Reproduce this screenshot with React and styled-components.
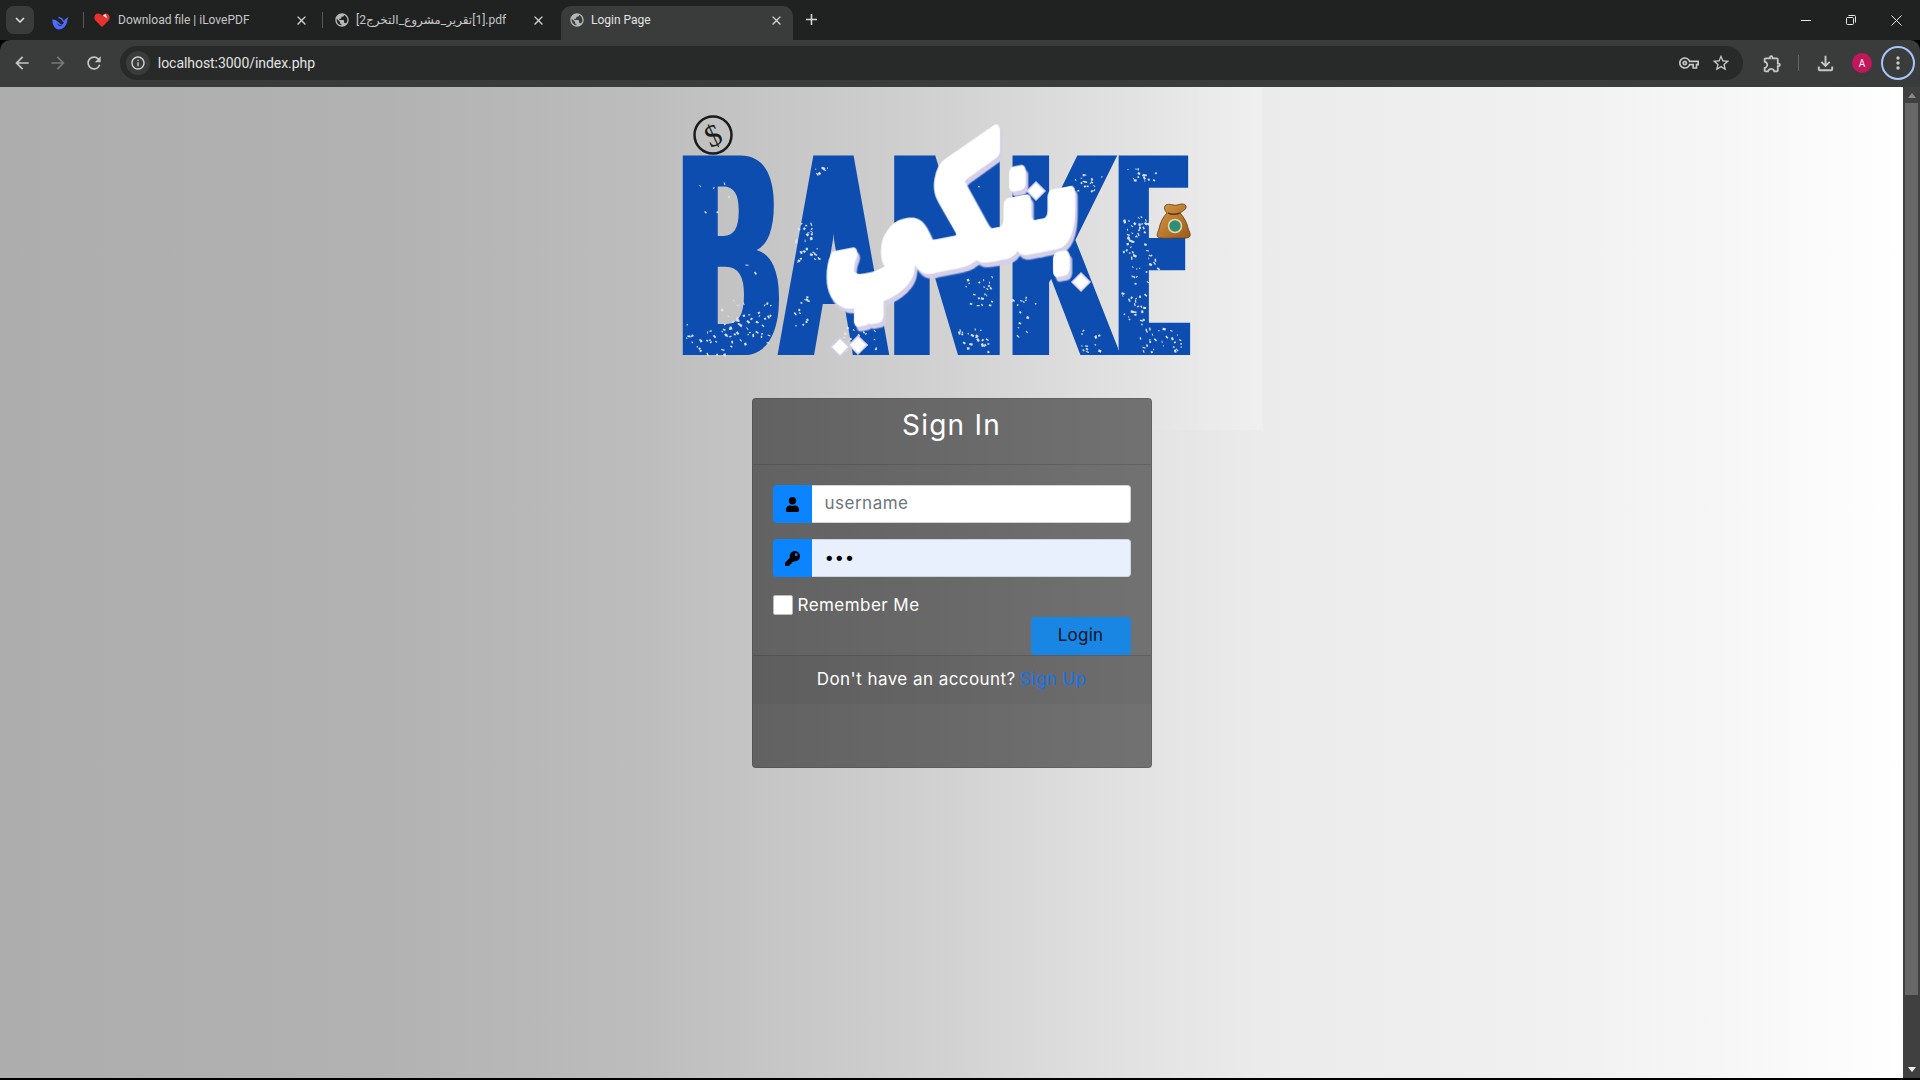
import React from 'react';
import styled, { createGlobalStyle } from 'styled-components';
import {
  MdArrowBack, MdArrowForward, MdRefresh, MdInfoOutline, MdStarBorder, MdOutlineExtension,
  MdOutlineFileDownload, MdMoreVert, MdOutlineVpnKey, MdClose, MdAdd, MdExpandMore, MdPublic,
} from 'react-icons/md';
import { FaUser, FaKey } from 'react-icons/fa';

const GlobalStyle = createGlobalStyle`
  html, body { margin: 0; height: 100%; overflow: hidden; background: #000; }
  * { box-sizing: border-box; }
`;

const Shell = styled.div`
  height: 100vh;
  display: flex;
  flex-direction: column;
  font-family: Roboto, "DejaVu Sans", sans-serif;
`;

/* browser chrome */
const TabStrip = styled.div`
  height: 40px;
  flex: none;
  background: #202222;
  display: flex;
  align-items: flex-end;
  color: #c7c7c7;
  font-size: 12px;
`;
const TabSearch = styled.div`
  width: 28px;
  height: 28px;
  margin: 0 12px 6px 6px;
  border-radius: 8px;
  background: #3a3b3b;
  color: #e6e6e6;
  display: flex;
  align-items: center;
  justify-content: center;
  font-size: 18px;
`;
const Pinned = styled.div`
  width: 28px;
  height: 34px;
  display: flex;
  align-items: center;
  justify-content: center;
  margin-right: 9px;
`;
const Divider = styled.div`
  width: 1px;
  height: 16px;
  margin-bottom: 12px;
  background: #55585a;
  flex: none;
`;
const Tab = styled.div`
  width: ${p => p.$width}px;
  height: 34px;
  flex: none;
  padding: 0 ${p => p.$right}px 6px ${p => p.$left}px;
  display: flex;
  align-items: center;
  gap: ${p => p.$gap}px;
  border-radius: 10px 10px 0 0;
  background: ${p => (p.$active ? '#3a3b3b' : 'transparent')};
  color: ${p => (p.$active ? '#e3e3e3' : '#c7c7c7')};
`;
const TabTitle = styled.span`
  flex: 1;
  white-space: nowrap;
  overflow: hidden;
`;
const TabClose = styled(MdClose)`
  font-size: 15px;
  color: #d5d5d5;
  flex: none;
`;
const Favicon = styled.span`
  display: flex;
  font-size: 16px;
  color: #b4b6b8;
  flex: none;
`;
const NewTab = styled(MdAdd)`
  font-size: 19px;
  margin: 0 0 11px 9px;
  color: #d5d5d5;
`;
const WindowControls = styled.div`
  margin-left: auto;
  height: 40px;
  padding-right: 18px;
  display: flex;
  align-items: center;
  gap: 35px;
  color: #e8e8e8;
`;
const Toolbar = styled.div`
  height: 47px;
  flex: none;
  background: #3a3b3b;
  border-radius: 10px 10px 0 0;
  display: flex;
  align-items: center;
  padding: 0 5px 1px 4px;
  color: #c7c7c7;
`;
const NavIcon = styled.span`
  width: 36px;
  display: flex;
  justify-content: center;
  font-size: 20px;
  color: ${p => (p.$off ? '#777' : '#c7c7c7')};
`;
const Omnibox = styled.div`
  width: 1626px;
  height: 34px;
  margin-left: 8px;
  background: #282929;
  border-radius: 17px;
  display: flex;
  align-items: center;
  padding: 0 6px;
  color: #e3e3e3;
  font-size: 14px;
  letter-spacing: -0.05px;
`;
const SiteInfo = styled.span`
  width: 24px;
  height: 24px;
  margin-right: 8px;
  border-radius: 50%;
  background: #3a3b3b;
  display: flex;
  align-items: center;
  justify-content: center;
  font-size: 16px;
  color: #d5d5d5;
`;
const OmniActions = styled.div`
  margin-left: auto;
  display: flex;
  align-items: center;
  gap: 12px;
  font-size: 20px;
  padding-right: 6px;
  color: #c7c7c7;
`;
const ToolActions = styled.div`
  flex: 1;
  display: flex;
  align-items: center;
  color: #c7c7c7;
  font-size: 21px;
  padding-left: 19px;
`;
const ToolSep = styled.div`
  width: 1px;
  height: 16px;
  margin: 0 15px 0 15px;
  background: #666;
`;
const DownloadIcon = styled(MdOutlineFileDownload)`
  font-size: 23px;
`;
const Avatar = styled.div`
  width: 20px;
  height: 20px;
  margin-left: 15px;
  border-radius: 50%;
  background: #c2185b;
  color: #fff;
  font-size: 10px;
  display: flex;
  align-items: center;
  justify-content: center;
`;
const MenuRing = styled.div`
  width: 34px;
  height: 34px;
  margin-left: 9px;
  border: 2px solid #a8c7fa;
  border-radius: 50%;
  display: flex;
  align-items: center;
  justify-content: center;
  font-size: 20px;
`;

/* page */
const Viewport = styled.div`
  flex: 1;
  min-height: 0;
  display: flex;
`;
const Page = styled.div`
  flex: 1;
  display: flex;
  flex-direction: column;
  align-items: center;
  background: linear-gradient(90deg, #adadad 0%, #b2b2b2 20%, #bcbcbc 33%, #d2d2d2 50%, #e0e0e0 58%, #ebebeb 66%, #f0f0f0 80%, #f6f6f6 90%, #ffffff 100%);
`;
const LogoBox = styled.div`
  width: 623px;
  height: 343px;
  margin-bottom: -32px;
  flex: none;
  background: linear-gradient(90deg, rgba(255,255,255,0) 80%, rgba(255,255,255,.22) 100%);
  svg { display: block; }
`;
const Scrollbar = styled.div`
  width: 17px;
  flex: none;
  background: #404040;
  display: flex;
  flex-direction: column;
  align-items: center;
  padding: 6px 2px 6px;
`;
const Thumb = styled.div`
  width: 13px;
  height: 892px;
  margin: 5px 0 auto;
  background: #686868;
`;
const ArrowUp = styled.div`
  width: 0;
  height: 0;
  border: 4px solid transparent;
  border-top: 0;
  border-bottom: 5px solid ${p => p.$color};
`;
const ArrowDown = styled.div`
  width: 0;
  height: 0;
  border: 4px solid transparent;
  border-bottom: 0;
  border-top: 5px solid ${p => p.$color};
`;
const BottomEdge = styled.div`
  height: 2px;
  flex: none;
  background: #000;
`;

/* login card */
const Card = styled.div`
  width: 400px;
  height: 370px;
  flex: none;
  position: relative;
  background: rgba(0, 0, 0, 0.5);
  border: 1px solid rgba(0, 0, 0, 0.125);
  border-radius: 4px;
  font-family: Inter, "Liberation Sans", sans-serif;
`;
const CardHeader = styled.div`
  height: 66px;
  border-bottom: 1px solid rgba(0, 0, 0, 0.125);
  text-align: center;
  h3 {
    margin: 0;
    padding-top: 9px;
    font-size: 28px;
    font-weight: 400;
    line-height: 34px;
    letter-spacing: 1.2px;
    color: #fff;
  }
`;
const CardBody = styled.div`
  height: 190px;
  padding: 20px 20px 0;
`;
const InputGroup = styled.div`
  display: flex;
  height: 38px;
  margin-bottom: 16px;
`;
const Addon = styled.div`
  width: 39px;
  flex: none;
  background: #0a84ff;
  border-radius: 4px 0 0 4px;
  display: flex;
  align-items: center;
  justify-content: center;
  color: #000;
  font-size: 15px;
`;
const Field = styled.input`
  flex: 1;
  min-width: 0;
  height: 38px;
  padding: 0 13px 2px;
  border: 1px solid #ced4da;
  border-left: 0;
  border-radius: 0 4px 4px 0;
  outline: none;
  background: ${p => (p.$filled ? '#e8f0fe' : '#fff')};
  color: #000;
  font-family: inherit;
  font-size: 17px;
  letter-spacing: 0.5px;
  &::placeholder { color: #6c757d; opacity: 1; }
`;
const Remember = styled.label`
  display: flex;
  align-items: center;
  gap: 5px;
  height: 20px;
  margin-top: 18px;
  color: #fff;
  font-size: 17px;
  letter-spacing: 0.45px;
`;
const Box = styled.span`
  width: 20px;
  height: 20px;
  background: #fff;
  border: 1px solid #bbb;
  border-radius: 2px;
`;
const LoginRow = styled.div`
  display: flex;
  justify-content: flex-end;
  margin-top: 2px;
`;
const LoginButton = styled.button`
  width: 100px;
  height: 38px;
  padding: 0 0 2px;
  border: 0;
  border-radius: 4px;
  background: #1a86e3;
  color: #0b1420;
  font-family: inherit;
  font-size: 17px;
  letter-spacing: 0.2px;
`;
const CardFooter = styled.div`
  height: 49px;
  padding-bottom: 2px;
  border-top: 1px solid rgba(0, 0, 0, 0.125);
  background: rgba(0, 0, 0, 0.03);
  display: flex;
  align-items: center;
  justify-content: center;
  gap: 4px;
  color: #fff;
  font-size: 17px;
  letter-spacing: 0.45px;
  a { color: #1272f5; text-decoration: none; }
`;

const Heart = () => (
  <svg width="16" height="16" viewBox="0 0 16 16">
    <path d="M8 15 1.2 8.2C-.6 6 .6 1.6 4 1.6c1.800 0 3 .9 4 2.200 1-1.300 2.200-2.200 4-2.200 3.400 0 4.600 4.400 2.800 6.600Z" fill="#e5322d" />
    <path d="M9 3.500 11.500 2l2 4.500Z" fill="#fff" />
  </svg>
);

const Whale = () => (
  <svg width="17" height="14" viewBox="0 0 17 14">
    <path d="M.5 3.500C3 3 5.500 5 8 7.500c1.500 1.500 3 1 3.500-.5C12 5 12.500 3 14 2.500L16.500 1c-.5 1.500-1 2-1.200 3.500-.4 4.500-3.800 9-8.300 9-3.800 0-7-4.500-6.500-10Z" fill="#4d6bfe" />
    <path d="M6.500 1.500c2.500.5 4.500 2 5 4.500M5 10c1 .5 2 .5 3 0" stroke="#4d6bfe" strokeWidth="1.300" fill="none" />
    <path d="M5.500 8c1 1 2.500 2 4 1.500" stroke="#202222" strokeWidth="1" fill="none" />
  </svg>
);

const Restore = () => (
  <svg width="10" height="10" viewBox="0 0 10 10" fill="none" stroke="currentColor">
    <rect x=".5" y="2.500" width="7" height="7" rx="1" />
    <path d="M2.500 .5h6a1 1 0 0 1 1 1v6" />
  </svg>
);

const Minimize = () => (
  <svg width="10" height="10" viewBox="0 0 10 10" stroke="currentColor"><path d="M0 5.500h10" /></svg>
);

const CloseX = () => (
  <svg width="11" height="11" viewBox="0 0 11 11" stroke="currentColor"><path d="M.5 .5l10 10M10.500 .5l-10 10" /></svg>
);

// small seeded generator so the speckles stay the same on every render
const makeSpeckles = () => {
  let seed = 11;
  const rnd = () => {
    seed = (seed * 16807) % 2147483647;
    return seed / 2147483647;
  };
  const clusters = [
    [71, 252, 24, 16, 34], [113, 234, 20, 22, 34], [168, 155, 12, 20, 30], [161, 224, 10, 18, 12],
    [219, 248, 18, 14, 26], [340, 207, 16, 20, 22], [333, 252, 16, 12, 22], [385, 228, 14, 20, 14],
    [450, 97, 16, 10, 22], [450, 252, 12, 14, 12], [498, 148, 14, 20, 42], [505, 183, 14, 14, 24],
    [495, 221, 14, 16, 24], [519, 252, 22, 12, 28], [502, 86, 14, 8, 14], [180, 85, 8, 6, 8],
    [75, 100, 20, 25, 6], [100, 190, 20, 40, 6], [320, 120, 25, 30, 4],
  ];
  const dots = [];
  clusters.forEach(([cx, cy, sx, sy, n]) => {
    for (let i = 0; i < n; i++) {
      dots.push({
        x: cx + (rnd() - 0.5) * 2 * sx,
        y: cy + (rnd() - 0.5) * 2 * sy,
        w: 1 + rnd() * 2.4,
        h: 0.8 + rnd() * 1.6,
        r: rnd() * 90,
      });
    }
  });
  return dots;
};
const speckles = makeSpeckles();

const letters = [
  { c: 'B', x: 40, w: 93 },
  { c: 'A', x: 140, w: 101 },
  { c: 'N', x: 250, w: 108 },
  { c: 'K', x: 369, w: 101 },
  { c: 'E', x: 478, w: 64 },
];

const diamonds = [[396, 104], [441, 195], [200, 260], [218, 258]];

const Logo = () => (
  <svg width="623" height="343" viewBox="0 0 623 343">
    <defs>
      <filter id="fatten" x="-30%" y="-10%" width="160%" height="120%">
        <feMorphology operator="dilate" radius="8 0" />
      </filter>
      <filter id="lift" x="-10%" y="-10%" width="120%" height="120%">
        <feDropShadow dx="3" dy="4" stdDeviation="0" floodColor="#d6cfe9" />
      </filter>
      <linearGradient id="sack" x1="0" y1="0" x2="1" y2="1">
        <stop offset="0" stopColor="#d99a45" />
        <stop offset="1" stopColor="#9a5a1c" />
      </linearGradient>
    </defs>
    <circle cx="73" cy="48" r="18.500" fill="none" stroke="#1b1b1b" strokeWidth="2.500" />
    <text x="73" y="59" textAnchor="middle" fontFamily="Liberation Serif, serif" fontSize="31" fill="#1b1b1b" transform="rotate(-25 73 48)">$</text>
    <g filter="url(#fatten)" fill="#0d4db0" fontFamily="Liberation Sans, sans-serif" fontWeight="700" fontSize="290">
      {letters.map(l => (
        <text key={l.c} x={l.x + 2} y="268" textLength={l.w + 2} lengthAdjust="spacingAndGlyphs">{l.c}</text>
      ))}
    </g>
    <g fill="#dfe3ea">
      {speckles.map((d, i) => (
        <rect key={i} x={d.x} y={d.y} width={d.w} height={d.h} transform={`rotate(${d.r} ${d.x} ${d.y})`} />
      ))}
    </g>
    <g filter="url(#lift)" transform="translate(312 176) skewY(-11) scale(.86 1.3)">
      <text x="0" y="0" textAnchor="middle" fontFamily="DejaVu Sans, sans-serif" fontWeight="700" fontSize="125" fill="#fff" stroke="#fff" strokeWidth="10" strokeLinejoin="round" direction="rtl">بنكي</text>
    </g>
    <g fill="#fff">
      {diamonds.map(([x, y]) => (
        <path key={x} d={`M${x} ${y - 9}l9 9-9 9-9-9Z`} stroke="#d6cfe9" strokeWidth="1.500" />
      ))}
    </g>
    <g>
      <path d="M526 118c3-2 8 1 11 0s8-2 9 1-3 5-6 7c4 4 7 10 8 15 1 3 3 6 2 8-1 3-8 2-14 2s-15 1-18-1c-2-2 0-5 1-8 1-6 4-12 8-16-2-2-4-6-1-8Z" fill="url(#sack)" stroke="#5e3a12" strokeWidth=".8" />
      <path d="M528 126c3 1.500 8 1.500 12 0" stroke="#5e3a12" strokeWidth="1.500" fill="none" />
      <circle cx="535" cy="139" r="6.500" fill="#2f8f74" stroke="#e8d9a8" strokeWidth="1.500" />
    </g>
  </svg>
);

export default function App() {
  return (
    <Shell>
      <GlobalStyle />
      <TabStrip>
        <TabSearch><MdExpandMore /></TabSearch>
        <Pinned><Whale /></Pinned>
        <Divider />
        <Tab $width={238} $left={10} $right={13} $gap={8}>
          <Favicon><Heart /></Favicon>
          <TabTitle>Download file | iLovePDF</TabTitle>
          <TabClose />
        </Tab>
        <Divider />
        <Tab $width={238} $left={11} $right={15} $gap={6}>
          <Favicon><MdPublic /></Favicon>
          <TabTitle>{'\u200E[2\u200Eتقرير_مشروع_التخرج\u200E[1].pdf'}</TabTitle>
          <TabClose />
        </Tab>
        <Tab $active $width={232} $left={8} $right={9} $gap={6}>
          <Favicon><MdPublic /></Favicon>
          <TabTitle>Login Page</TabTitle>
          <TabClose />
        </Tab>
        <NewTab />
        <WindowControls>
          <Minimize />
          <Restore />
          <CloseX />
        </WindowControls>
      </TabStrip>
      <Toolbar>
        <NavIcon><MdArrowBack /></NavIcon>
        <NavIcon $off><MdArrowForward /></NavIcon>
        <NavIcon><MdRefresh /></NavIcon>
        <Omnibox>
          <SiteInfo><MdInfoOutline /></SiteInfo>
          localhost:3000/index.php
          <OmniActions>
            <MdOutlineVpnKey />
            <MdStarBorder />
          </OmniActions>
        </Omnibox>
        <ToolActions>
          <MdOutlineExtension />
          <ToolSep />
          <DownloadIcon />
          <Avatar>A</Avatar>
          <MenuRing><MdMoreVert /></MenuRing>
        </ToolActions>
      </Toolbar>
      <Viewport>
        <Page>
          <LogoBox><Logo /></LogoBox>
          <Card>
            <CardHeader><h3>Sign In</h3></CardHeader>
            <CardBody>
              <InputGroup>
                <Addon><FaUser /></Addon>
                <Field type="text" placeholder="username" />
              </InputGroup>
              <InputGroup>
                <Addon><FaKey /></Addon>
                <Field $filled type="password" defaultValue="123" />
              </InputGroup>
              <Remember><Box />Remember Me</Remember>
              <LoginRow><LoginButton>Login</LoginButton></LoginRow>
            </CardBody>
            <CardFooter>
              Don't have an account?<a href="#signup">Sign Up</a>
            </CardFooter>
          </Card>
        </Page>
        <Scrollbar>
          <ArrowUp $color="#8a8a8a" />
          <Thumb />
          <ArrowDown $color="#f0f0f0" />
        </Scrollbar>
      </Viewport>
      <BottomEdge />
    </Shell>
  );
}
